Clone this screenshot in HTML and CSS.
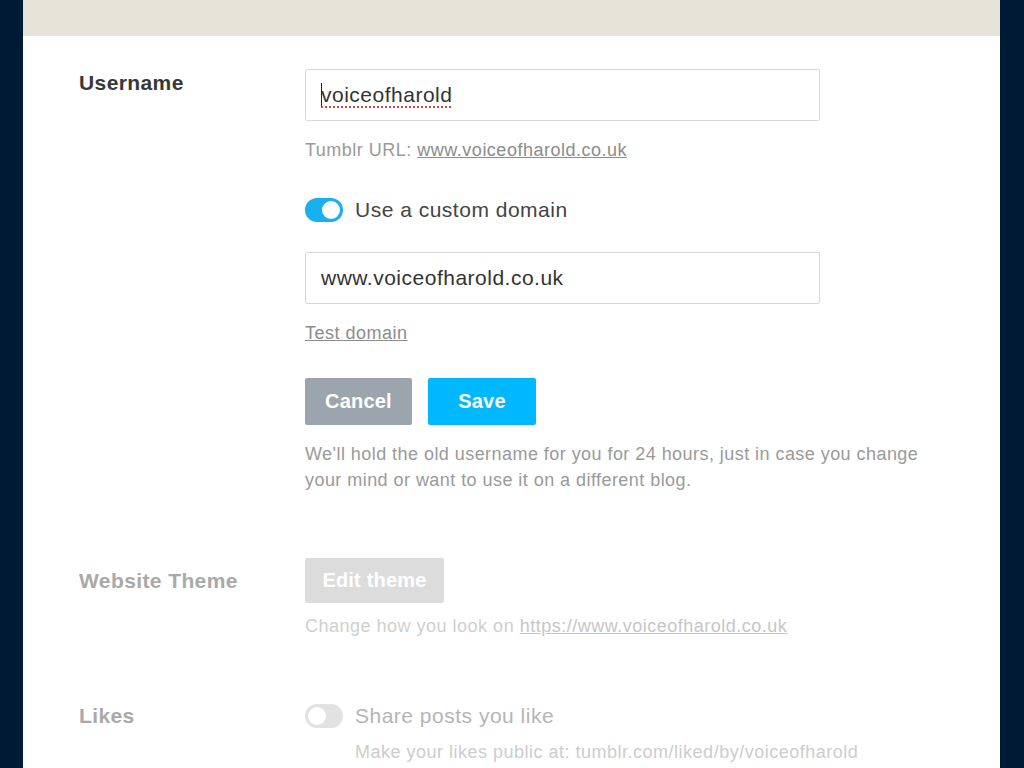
FILE: index.html
```html
<!DOCTYPE html>
<html lang="en">
<head>
<meta charset="utf-8">
<title>Blog settings</title>
<link rel="stylesheet" href="styles.css">
</head>
<body>
<div class="panel">
  <div class="topband"></div>
  <div class="content">
    <section class="row row-username">
      <div class="label">Username</div>
      <div class="field">
        <div class="input"><span class="caret"></span><span class="spell">voiceofharold</span></div>
        <p class="note url-note">Tumblr URL: <a href="#">www.voiceofharold.co.uk</a></p>
        <div class="toggle-row">
          <span class="toggle on"><span class="knob"></span></span>
          <span class="toggle-label">Use a custom domain</span>
        </div>
        <div class="input domain">www.voiceofharold.co.uk</div>
        <p class="note test"><a href="#">Test domain</a></p>
        <div class="buttons">
          <button class="btn cancel">Cancel</button>
          <button class="btn save">Save</button>
        </div>
        <p class="note help">We'll hold the old username for you for 24 hours, just in case you change your mind or want to use it on a different blog.</p>
      </div>
    </section>
    <section class="row row-theme disabled">
      <div class="label">Website Theme</div>
      <div class="field">
        <button class="btn edit">Edit theme</button>
        <p class="note change">Change how you look on <a href="#">https://www.voiceofharold.co.uk</a></p>
      </div>
    </section>
    <section class="row row-likes disabled">
      <div class="label">Likes</div>
      <div class="field">
        <div class="toggle-row likes-toggle">
          <span class="toggle off"><span class="knob"></span></span>
          <span class="toggle-label">Share posts you like</span>
        </div>
        <p class="note sub">Make your likes public at: tumblr.com/liked/by/voiceofharold</p>
      </div>
    </section>
  </div>
</div>
</body>
</html>
```

FILE: styles.css
```css
html, body {
  margin: 0;
  padding: 0;
  height: 100%;
  overflow: hidden;
}
body {
  background: #001935;
  font-family: "Liberation Sans", Arial, sans-serif;
  color: #444;
}
.panel {
  margin: 0 24px 0 23px;
  background: #fff;
  height: 768px;
}
.topband {
  height: 36px;
  background: #e7e3d9;
}
.content {
  padding: 33px 0 0 56px;
}
.row {
  display: grid;
  grid-template-columns: 226px 515px;
}
.label {
  font-size: 21px;
  font-weight: bold;
  letter-spacing: 0.4px;
  color: #383838;
  line-height: 24px;
  padding-top: 2px;
}
.input {
  height: 50px;
  border: 1px solid #d8d8d8;
  border-radius: 2px;
  box-sizing: content-box;
  display: flex;
  align-items: center;
  padding-left: 15px;
  font-size: 21px;
  letter-spacing: 0.5px;
  color: #333;
}
.caret {
  display: inline-block;
  width: 1px;
  height: 25px;
  background: #222;
  margin-right: -1px;
}
.spell {
  text-decoration: underline dotted #e0443a;
  text-decoration-thickness: 2px;
  text-underline-offset: 4px;
}
.note {
  margin: 0;
  font-size: 18px;
  letter-spacing: 0.5px;
  line-height: 24px;
  color: #9a9a9a;
  white-space: nowrap;
}
.note a {
  color: #8c8c8c;
  text-decoration: underline;
}
.url-note {
  margin-top: 17px;
}
.toggle-row {
  display: flex;
  align-items: center;
  margin-top: 36px;
  height: 24px;
}
.toggle {
  width: 38px;
  height: 24px;
  border-radius: 12px;
  position: relative;
  flex: none;
}
.toggle.on { background: #1aafef; }
.toggle.off { background: #e2e2e2; }
.knob {
  position: absolute;
  top: 3px;
  width: 18px;
  height: 18px;
  border-radius: 50%;
  background: #fff;
}
.toggle.on .knob { right: 3px; }
.toggle.off .knob { left: 3px; }
.toggle-label {
  margin-left: 12px;
  font-size: 21px;
  letter-spacing: 0.5px;
  color: #444;
}
.domain {
  margin-top: 30px;
}
.test {
  margin-top: 17px;
}
.buttons {
  display: flex;
  gap: 16px;
  margin-top: 33px;
}
.btn {
  border: 0;
  border-radius: 2px;
  height: 47px;
  font-family: "Liberation Sans", Arial, sans-serif;
  font-size: 20px;
  letter-spacing: 0.2px;
  font-weight: bold;
  color: #fff;
  padding: 0;
}
.cancel {
  width: 107px;
  background: #9ca5ae;
}
.save {
  width: 108px;
  background: #00b8ff;
}
.help {
  margin-top: 16px;
  line-height: 26px;
  width: 625px;
  letter-spacing: 0.45px;
  white-space: normal;
}
.row-theme {
  margin-top: 65px;
}
.row-theme .label {
  padding-top: 11px;
}
.edit {
  width: 139px;
  height: 45px;
  background: #dcdcdc;
  display: block;
}
.change {
  margin-top: 11px;
  color: #cfcfcf;
}
.change a { color: #c6c6c6; }
.disabled .label {
  color: #a9a9a9;
}
.row-likes {
  margin-top: 66px;
}
.row-likes .label {
  padding-top: 0;
}
.likes-toggle {
  margin-top: 0;
}
.row-likes .toggle-label {
  color: #b5b5b5;
}
.sub {
  margin-top: 12px;
  padding-left: 50px;
  color: #cdcdcd;
}
```
